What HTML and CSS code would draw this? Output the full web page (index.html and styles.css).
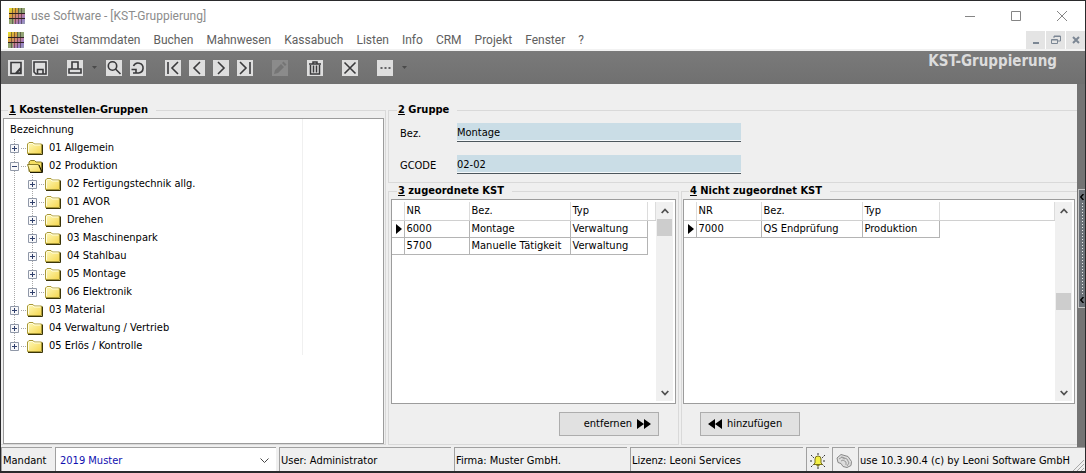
FILE: index.html
```html
<!DOCTYPE html>
<html lang="de">
<head>
<meta charset="utf-8">
<title>use Software - [KST-Gruppierung]</title>
<link rel="stylesheet" href="styles.css">
</head>
<body>
<svg class="defs" width="0" height="0" aria-hidden="true">
  <defs>
    <linearGradient id="fill" x1="0" y1="0" x2="1" y2="1"><stop offset="0" stop-color="#fffbc0"/><stop offset="1" stop-color="#f5d64e"/></linearGradient>
    <linearGradient id="rainbow" x1="0" y1="0" x2="1" y2="1"><stop offset="0" stop-color="#e8e830"/><stop offset=".3" stop-color="#d8a03c"/><stop offset=".55" stop-color="#d07c88"/><stop offset=".8" stop-color="#9a80c8"/><stop offset="1" stop-color="#98a0b0"/></linearGradient>
    <symbol id="logo" viewBox="0 0 16 16"><path fill="url(#rainbow)" d="M0 0h16v16H0z"/><path fill="#78b070" opacity=".7" d="M9 0h7v5H9zM0 11h5v5H0z"/><path stroke="#302828" d="M3.500 0v16M6.500 0v16M9.500 0v16M12.500 0v16" stroke-width=".7" opacity=".75"/><path stroke="#302020" d="M0 5.500h16M0 10.500h16"/></symbol>
    <symbol id="folder" viewBox="0 0 16 14"><path fill="url(#fill)" stroke="#a89838" d="M.5 12.500V3L2 1.500h4L7.500 3h7v9.500z"/><path fill="none" stroke="#fffde0" d="M1.500 11V3.500L2.500 2.500h3L7 4h6.500"/><path fill="none" stroke="#3a3408" d="M1 13.500h14.500V3.500"/></symbol>
    <symbol id="folder-open" viewBox="0 0 16 14"><path fill="#f5df62" stroke="#8a7c28" d="M2 12.500V3l1.500-1.500h4L9 3h5.500v9.500z"/><path fill="url(#fill)" stroke="#8a7c28" d="M.5 5.500h11l3 7.500H3z"/><path fill="none" stroke="#201c04" d="M3 13.500h12.500V3.500M12 6l3 7"/></symbol>
    <symbol id="plus" viewBox="0 0 9 9"><path fill="#f8f8fa" stroke="#9098a8" d="M.5.5h8v8h-8z"/><path stroke="#30406c" d="M2 4.500h5M4.500 2v5"/></symbol>
    <symbol id="minus" viewBox="0 0 9 9"><path fill="#f8f8fa" stroke="#9098a8" d="M.5.5h8v8h-8z"/><path stroke="#30406c" d="M2 4.500h5"/></symbol>
    <symbol id="up" viewBox="0 0 8 6"><path fill="none" stroke="#505050" stroke-width="1.800" d="M.7 5 4 1.500 7.300 5"/></symbol>
    <symbol id="down" viewBox="0 0 8 6"><path fill="none" stroke="#505050" stroke-width="1.800" d="M.7 1 4 4.500 7.300 1"/></symbol>
  </defs>
</svg>
<div class="window">
  <header class="titlebar">
    <svg class="logo"><use href="#logo"/></svg>
    <h1 class="window-title">use Software - [KST-Gruppierung]</h1>
    <div class="window-buttons">
      <button aria-label="Minimieren"><svg viewBox="0 0 10 10"><path d="M0 5.500h10"/></svg></button>
      <button aria-label="Maximieren"><svg viewBox="0 0 10 10"><path d="M.5.5h9v9h-9z"/></svg></button>
      <button aria-label="Schließen"><svg viewBox="0 0 10 10"><path d="m0 0 10 10M10 0 0 10"/></svg></button>
    </div>
  </header>
  <nav class="menubar">
    <svg class="logo"><use href="#logo"/></svg>
    <div class="menu">
      <button>Datei</button><button>Stammdaten</button><button>Buchen</button><button>Mahnwesen</button><button>Kassabuch</button><button>Listen</button><button>Info</button><button>CRM</button><button>Projekt</button><button>Fenster</button><button>?</button>
    </div>
    <div class="child-buttons">
      <button aria-label="Fenster minimieren"><svg viewBox="0 0 10 10"><path stroke-width="2" d="M2 8h6"/></svg></button>
      <button aria-label="Fenster wiederherstellen"><svg viewBox="0 0 10 10"><path d="M3 3V1h6.500v5H7M3 1.500h6M.5 4.500h6v4h-6zM.5 5h6"/></svg></button>
      <button aria-label="Fenster schließen"><svg viewBox="0 0 10 10"><path stroke-width="2" d="m2 2 6 6M8 2 2 8"/></svg></button>
    </div>
  </nav>
  <div class="toolbar">
    <div class="tools">
      <button aria-label="Neu"><svg viewBox="0 0 16 16"><path d="M3 2.500h10v11H3zM12.500 8 7.500 13.500M12.500 9v4h-4z"/></svg></button>
      <button aria-label="Speichern"><svg viewBox="0 0 16 16"><path d="M2 2h12v12H4l-2-2zM5.500 14V9.500h5.500V14"/></svg></button>
    </div>
    <div class="tools">
      <button aria-label="Drucken"><svg viewBox="0 0 16 16"><path d="M5 9V2h6v7M2 9h12v4H2z"/></svg></button>
      <button class="drop" aria-label="Druckoptionen"><svg viewBox="0 0 5 3"><path d="M0 0h5L2.500 3z"/></svg></button>
      <button aria-label="Suchen"><svg viewBox="0 0 16 16"><circle cx="6.500" cy="6" r="4.200"/><path d="m9.500 9 5 5"/></svg></button>
      <button aria-label="Aktualisieren"><svg viewBox="0 0 16 16"><path d="M3.500 6a5 5 0 1 1 5 7H3M1.500 9.500H6V13"/></svg></button>
    </div>
    <div class="tools">
      <button aria-label="Erster"><svg viewBox="0 0 16 16"><path d="M3 2v12M13 2 7 8l6 6"/></svg></button>
      <button aria-label="Zurück"><svg viewBox="0 0 16 16"><path d="M11 2 5 8l6 6"/></svg></button>
      <button aria-label="Weiter"><svg viewBox="0 0 16 16"><path d="m5 2 6 6-6 6"/></svg></button>
      <button aria-label="Letzter"><svg viewBox="0 0 16 16"><path d="M13 2v12M3 2l6 6-6 6"/></svg></button>
    </div>
    <div class="tools">
      <button class="off" disabled aria-label="Bearbeiten"><svg viewBox="0 0 16 16"><path d="m2 14 1-4 6-6 3 3-6 6zM10 3l1.500-1.500 3 3L13 6z"/></svg></button>
    </div>
    <div class="tools">
      <button aria-label="Löschen"><svg viewBox="0 0 16 16"><path d="M2 4h12M6 3.500V2h4v1.500M3.500 5v9h9V5M6.500 5.500v7M9.500 5.500v7" stroke-width="1.500"/></svg></button>
    </div>
    <div class="tools">
      <button aria-label="Abbrechen"><svg viewBox="0 0 16 16"><path d="m2.500 2.500 11 11M13.500 2.500l-11 11"/></svg></button>
    </div>
    <div class="tools">
      <button aria-label="Mehr"><svg viewBox="0 0 16 16"><path d="M3.500 8h2M7.500 8h2M11.500 8h2"/></svg></button>
      <button class="drop" aria-label="Weitere Optionen"><svg viewBox="0 0 5 3"><path d="M0 0h5L2.500 3z"/></svg></button>
    </div>
    <h2 class="page-title">KST-Gruppierung</h2>
  </div>
  <div class="body">
    <main class="content">
      <fieldset class="group groups">
        <legend><u>1</u> Kostenstellen-Gruppen</legend>
        <div class="tree">
          <div class="tree-inner">
            <div class="tree-head">Bezeichnung</div>
            <ul>
              <li><div class="node"><button aria-label="Öffnen"><svg><use href="#plus"/></svg></button><i></i><svg class="folder"><use href="#folder"/></svg><span>01 Allgemein</span></div></li>
              <li><div class="node"><button aria-label="Schließen"><svg><use href="#minus"/></svg></button><i></i><svg class="folder"><use href="#folder-open"/></svg><span>02 Produktion</span></div>
                <ul>
                  <li><div class="node"><button aria-label="Öffnen"><svg><use href="#plus"/></svg></button><i></i><svg class="folder"><use href="#folder"/></svg><span>02 Fertigungstechnik allg.</span></div></li>
                  <li><div class="node"><button aria-label="Öffnen"><svg><use href="#plus"/></svg></button><i></i><svg class="folder"><use href="#folder"/></svg><span>01 AVOR</span></div></li>
                  <li><div class="node"><button aria-label="Öffnen"><svg><use href="#plus"/></svg></button><i></i><svg class="folder"><use href="#folder"/></svg><span>Drehen</span></div></li>
                  <li><div class="node"><button aria-label="Öffnen"><svg><use href="#plus"/></svg></button><i></i><svg class="folder"><use href="#folder"/></svg><span>03 Maschinenpark</span></div></li>
                  <li><div class="node"><button aria-label="Öffnen"><svg><use href="#plus"/></svg></button><i></i><svg class="folder"><use href="#folder"/></svg><span>04 Stahlbau</span></div></li>
                  <li><div class="node"><button aria-label="Öffnen"><svg><use href="#plus"/></svg></button><i></i><svg class="folder"><use href="#folder"/></svg><span>05 Montage</span></div></li>
                  <li><div class="node"><button aria-label="Öffnen"><svg><use href="#plus"/></svg></button><i></i><svg class="folder"><use href="#folder"/></svg><span>06 Elektronik</span></div></li>
                </ul></li>
              <li><div class="node"><button aria-label="Öffnen"><svg><use href="#plus"/></svg></button><i></i><svg class="folder"><use href="#folder"/></svg><span>03 Material</span></div></li>
              <li><div class="node"><button aria-label="Öffnen"><svg><use href="#plus"/></svg></button><i></i><svg class="folder"><use href="#folder"/></svg><span>04 Verwaltung / Vertrieb</span></div></li>
              <li><div class="node"><button aria-label="Öffnen"><svg><use href="#plus"/></svg></button><i></i><svg class="folder"><use href="#folder"/></svg><span>05 Erlös / Kontrolle</span></div></li>
            </ul>
          </div>
        </div>
      </fieldset>
      <div class="details">
        <fieldset class="group form">
          <legend><u>2</u> Gruppe</legend>
          <div class="field"><label for="bez">Bez.</label><input id="bez" value="Montage"></div>
          <div class="field"><label for="gcode">GCODE</label><input id="gcode" value="02-02"></div>
        </fieldset>
        <div class="lists">
          <fieldset class="group list">
            <legend><u>3</u> zugeordnete KST</legend>
            <div class="grid">
              <div class="grid-body">
                <table>
                  <thead><tr><th class="mark"></th><th class="nr">NR</th><th class="bez">Bez.</th><th class="typ">Typ</th><th class="rest"></th></tr></thead>
                  <tbody>
                    <tr><td class="mark"><svg viewBox="0 0 6 10"><path d="m0 0 6 5-6 5z"/></svg></td><td>6000</td><td>Montage</td><td>Verwaltung</td></tr>
                    <tr><td class="mark"></td><td>5700</td><td>Manuelle Tätigkeit</td><td>Verwaltung</td></tr>
                  </tbody>
                </table>
              </div>
              <div class="scrollbar"><button aria-label="Nach oben"><svg><use href="#up"/></svg></button><div class="track"><div class="thumb"></div></div><button aria-label="Nach unten"><svg><use href="#down"/></svg></button></div>
            </div>
            <div class="actions end"><button>entfernen<svg viewBox="0 0 14 10"><path d="m0 0 7 5-7 5zM7 0l7 5-7 5z"/></svg></button></div>
          </fieldset>
          <fieldset class="group list">
            <legend><u>4</u> Nicht zugeordnet KST</legend>
            <div class="grid">
              <div class="grid-body">
                <table>
                  <thead><tr><th class="mark"></th><th class="nr">NR</th><th class="bez">Bez.</th><th class="typ">Typ</th><th class="rest"></th></tr></thead>
                  <tbody>
                    <tr><td class="mark"><svg viewBox="0 0 6 10"><path d="m0 0 6 5-6 5z"/></svg></td><td>7000</td><td>QS Endprüfung</td><td>Produktion</td></tr>
                  </tbody>
                </table>
              </div>
              <div class="scrollbar middle"><button aria-label="Nach oben"><svg><use href="#up"/></svg></button><div class="track"><div class="thumb"></div></div><button aria-label="Nach unten"><svg><use href="#down"/></svg></button></div>
            </div>
            <div class="actions start"><button><svg viewBox="0 0 14 10"><path d="M7 0 0 5l7 5zM14 0 7 5l7 5z"/></svg>hinzufügen</button></div>
          </fieldset>
        </div>
      </div>
    </main>
    <aside class="side">
      <button class="splitter" aria-label="Seitenleiste öffnen"><svg viewBox="0 0 4 6"><path d="M3.500 0 .7 3l2.800 3"/></svg><span></span><svg viewBox="0 0 4 6"><path d="M3.500 0 .7 3l2.800 3"/></svg></button>
    </aside>
  </div>
  <footer class="status">
    <label class="cell" for="mandant">Mandant</label>
    <div class="cell choose"><select id="mandant"><option>2019 Muster</option></select><svg viewBox="0 0 9 5"><path d="m.5.5 4 4 4-4"/></svg></div>
    <div class="cell">User: Administrator</div>
    <div class="cell">Firma: Muster GmbH.</div>
    <div class="cell">Lizenz: Leoni Services</div>
    <div class="cell icon"><svg viewBox="0 0 16 16"><path stroke="#333" d="M1 2l3 3M15 2l-3 3M0 8h3M13 8h3M1 14l3-3M15 14l-3-3M8 0v2M8 14v2" stroke-dasharray="2 1"/><path fill="#f4f044" stroke="#77701c" d="M3.500 11.500 5 10V6q0-3 3-3t3 3v4l1.500 1.500zM7 12h2v1H7z"/></svg></div>
    <div class="cell icon"><svg viewBox="0 0 16 16"><path fill="#ddd" stroke="#888" d="M1 5 5 1.500l7 2 3.500 5-.5 4-4 2-4-1-2-3-3-1z"/><path fill="none" stroke="#999" d="m3 6 3-2 5 2 2 4-2 3M5 8l2-1 3 2v3M5 4l4 2"/></svg></div>
    <div class="cell version"><span>use 10.3.90.4 (c) by Leoni Software GmbH</span><svg viewBox="0 0 12 12"><path d="M1 12 12 1M5 12l7-7M9 12l3-3"/></svg></div>
  </footer>
</div>
</body>
</html>
```
FILE: styles.css
```css
* { box-sizing: border-box; }
body {
  margin: 0;
  font: 11px/16px "DejaVu Sans Condensed", "DejaVu Sans", sans-serif;
  color: #000;
}
button, input, select { font: inherit; color: inherit; border: 0; padding: 0; margin: 0; background: none; }
ul { list-style: none; margin: 0; padding: 0; }
h1, h2 { margin: 0; font-weight: normal; }
svg { display: block; flex: none; }
.defs { position: absolute; }

.window {
  min-height: 100vh;
  display: flex;
  flex-direction: column;
  border: 1px solid #2a2a2c;
  border-bottom-width: 2px;
  background: #efefef;
}
.logo { width: 16px; height: 16px; }

.titlebar, .menubar { display: flex; align-items: center; background: #fff; font: 12px/16px Roboto, "Open Sans", sans-serif; }
.titlebar { height: 30px; padding-left: 8px; gap: 6px; }
.window-title { flex: 1; font-size: 12px; color: #8c8c8c; }
.window-buttons { display: flex; }
.window-buttons button { width: 46px; height: 30px; display: grid; place-items: center; }
.window-buttons svg { width: 10px; height: 10px; fill: none; stroke: #858585; }
.menubar { height: 20px; padding-left: 7px; border-bottom: 2px solid #f2f2f2; }
.menu { flex: 1; display: flex; gap: 13px; padding-left: 7px; color: #606060; }
.child-buttons { display: flex; gap: 1px; }
.child-buttons button { width: 19px; height: 18px; background: #e4e4e4; display: grid; place-items: center; }
.child-buttons svg { width: 10px; height: 10px; fill: none; stroke: #7c8794; }

.toolbar { display: flex; align-items: center; gap: 19px; height: 33px; padding: 0 28px 0 7px; background: linear-gradient(#7a7a7a, #707070); }
.tools { display: flex; align-items: center; gap: 8px; }
.tools button { width: 16px; height: 16px; background: #dedede; }
.tools svg { width: 16px; height: 16px; fill: none; stroke: #3a3a3c; stroke-width: 1.6px; }
.tools .off { background: #8b8b8b; }
.tools .off svg { fill: #757575; stroke: none; }
.tools .drop { width: 7px; background: none; display: grid; place-items: center; }
.tools .drop svg { width: 5px; height: 3px; fill: #4a4a4a; stroke: none; }
.page-title { flex: 1; align-self: flex-start; text-align: right; font-size: 15px; line-height: 21px; font-weight: bold; color: #dcdcdc; }

.body { flex: 1; display: flex; }
.content { flex: 1; min-width: 0; display: grid; grid-template-columns: 385fr 689fr; gap: 2px; padding: 18px 0 2px; }
.group { min-width: 0; margin: 0; padding: 0; border: 1px solid #d9d9d9; display: flex; flex-direction: column; }
.group legend { margin-left: 6px; padding: 0 8px 0 1px; font-weight: bold; line-height: 16px; }
.groups { border-left: 0; padding: 0 1px 0 2px; }
.groups legend { margin-left: 5px; }
.tree { flex: 1; background: #fff; border: 1px solid #9c9c9c; }
.tree-inner { width: 79%; border-right: 1px solid #f0f0f0; }
.tree-head { padding: 3px 6px 1px; line-height: 16px; }
.tree ul ul { margin-left: 18px; }
.tree-inner > ul { margin-left: 6px; }
.tree li { background: repeating-linear-gradient(#a8a8a8 0 1px, transparent 1px 2px) 4px 0 / 1px 100% no-repeat; }
.tree li:last-child { background-size: 1px 9px; }
.node { display: flex; align-items: center; height: 18px; }
.node button svg { width: 9px; height: 9px; }
.node i { width: 5px; height: 1px; margin: 0 1px 0 2px; background: repeating-linear-gradient(90deg, #a8a8a8 0 1px, transparent 1px 2px); }
.folder { width: 16px; height: 14px; margin-right: 6px; }

.details { min-width: 0; display: flex; flex-direction: column; }
.form { padding: 5px 0 8px; gap: 13px; border-right: 0; }
.form legend { margin-left: 8px; }
.field { display: flex; align-items: center; padding-left: 11px; }
.field label { width: 57px; padding-top: 3px; }
.field input { width: 42%; height: 19px; background: #cadde6; border-bottom: 1px solid #4c565c; box-shadow: inset 0 -1px #f4f8fa; }
.lists { flex: 1; display: grid; grid-template-columns: 291fr 396fr; gap: 2px; }
.list { padding: 0 2px; }
.list:last-child { border-right: 0; padding-left: 1px; }
.grid { flex: 1; display: flex; border: 1px solid #9c9c9c; background: #fff; padding: 2px 2px 2px 0; }
.grid-body { flex: 1; min-width: 0; }
.grid table { width: 100%; table-layout: fixed; border-collapse: collapse; }
.grid th, .grid td { height: 17px; padding: 0 0 0 2px; line-height: 16px; text-align: left; font-weight: normal; white-space: nowrap; }
.grid th { height: 18px; border-right: 1px solid #dcdcdc; border-bottom: 1px solid #d0d0d0; }
.grid td { border-right: 1px solid #b4b4b4; border-bottom: 1px solid #b4b4b4; }
.grid .mark { width: 12px; padding-left: 4px; }
.mark svg { width: 6px; height: 10px; }
.nr { width: 65px; }
.bez { width: 101px; }
.typ { width: 77px; }
.scrollbar { width: 17px; display: flex; flex-direction: column; background: #f0f0f0; }
.scrollbar button { height: 17px; display: grid; place-items: center; }
.scrollbar svg { width: 8px; height: 6px; }
.track { flex: 1; padding: 0 1px; display: flex; flex-direction: column; }
.thumb { height: 17px; background: #cdcdcd; }
.middle .track { justify-content: center; }
.actions { display: flex; padding: 8px 17px; }
.actions.end { justify-content: flex-end; }
.actions button { width: 100px; height: 24px; display: flex; align-items: center; gap: 5px; border: 1px solid #adadad; background: #e1e1e1; padding: 0 7px; }
.actions.end button { justify-content: flex-end; }
.actions svg { width: 14px; height: 10px; }

.side { width: 8px; background: #747474; padding-top: 105px; }
.splitter { width: 7px; height: 119px; margin-left: 1px; display: flex; flex-direction: column; align-items: center; border: 1px solid #c4c4c4; border-right: 0; padding: 4px 0; background: #6c7278; }
.splitter svg { width: 4px; height: 6px; fill: none; stroke: #000; stroke-width: 1.5px; }
.splitter span { flex: 1; width: 1px; margin: 3px 0; background: repeating-linear-gradient(#e8e8e8 0 1px, transparent 1px 3px); }

.status { display: grid; grid-template-columns: 51px 221fr 172fr 173fr 173fr 23px 23px 227fr; gap: 3px; height: 24px; }
.cell { display: flex; align-items: center; min-width: 0; padding: 2px 1px 0; border-top: 1px solid #a0a0a0; border-left: 1px solid #a0a0a0; white-space: nowrap; }
.choose { display: grid; grid-template-columns: 1fr 15px; background: #fff; color: #1010b0; }
.choose select { grid-area: 1 / 1 / 2 / 3; height: 20px; padding-left: 3px; appearance: none; outline: 0; }
.choose svg { grid-area: 1 / 2; width: 9px; height: 5px; fill: none; stroke: #444; pointer-events: none; }
.icon { justify-content: center; }
.icon svg { width: 16px; height: 16px; }
.version { justify-content: space-between; }
.version svg { align-self: flex-end; width: 12px; height: 12px; stroke: #a8a8a8; }
```
